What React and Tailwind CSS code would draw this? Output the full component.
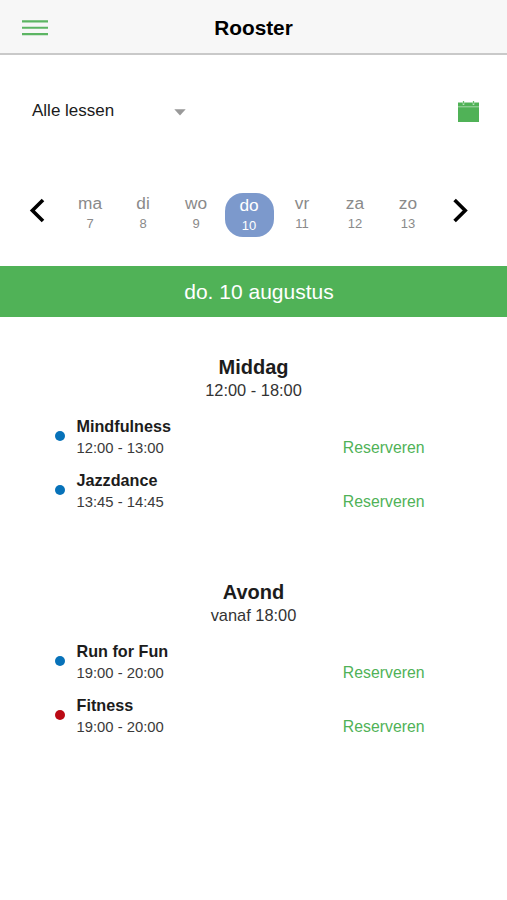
const days = [
  { name: 'ma', date: 7 },
  { name: 'di', date: 8 },
  { name: 'wo', date: 9 },
  { name: 'do', date: 10, active: true },
  { name: 'vr', date: 11 },
  { name: 'za', date: 12 },
  { name: 'zo', date: 13 },
];

const sections = [
  {
    title: 'Middag',
    time: '12:00 - 18:00',
    lessons: [
      { name: 'Mindfulness', time: '12:00 - 13:00', dot: 'bg-[#0772b9]' },
      { name: 'Jazzdance', time: '13:45 - 14:45', dot: 'bg-[#0772b9]' },
    ],
  },
  {
    title: 'Avond',
    time: 'vanaf 18:00',
    lessons: [
      { name: 'Run for Fun', time: '19:00 - 20:00', dot: 'bg-[#0772b9]' },
      { name: 'Fitness', time: '19:00 - 20:00', dot: 'bg-[#bb0a14]' },
    ],
  },
];

function Header() {
  return (
    <header className="grid h-[55px] grid-cols-[1fr_auto_1fr] items-center border-b-2 border-[#c9c9c9] bg-[#f7f7f7] pt-0.5">
      <button className="ml-[22px] w-[26px]">
        <svg width="26" height="16" viewBox="0 0 26 16">
          <path d="M0 1.4h26M0 7.8h26M0 14.1h26" stroke="#5cb563" strokeWidth="2.1" />
        </svg>
      </button>
      <h1 className="text-[20.8px] leading-6 font-bold text-black">Rooster</h1>
    </header>
  );
}

function Filters() {
  return (
    <div className="flex h-[112px] items-center pr-7 pl-8">
      <button className="flex w-[154px] items-center justify-between text-[17px] leading-6 text-[#1a1a1a]">
        Alle lessen
        <svg className="mt-0.5" width="12" height="7" viewBox="0 0 12 7">
          <path d="M0.3 0.3h11.4L6 6.6z" fill="#999" />
        </svg>
      </button>
      <svg className="ml-auto" width="21" height="21" viewBox="0 0 21 21">
        <path d="M0 1.5h21V21H0z" fill="#50b257" />
        <path d="M0 5.8h21" stroke="#a5d8a9" strokeWidth="1" />
        <path d="M5.5 0v4M15.5 0v4" stroke="#b9e0bc" strokeWidth="1.6" />
        <path d="M5.5 0v2.6M15.5 0v2.6" stroke="#50b257" strokeWidth="0.8" />
      </svg>
    </div>
  );
}

function WeekPicker() {
  return (
    <div className="flex h-[99px] items-start justify-between pt-[26px] pr-[38px] pl-[29px]">
      <svg className="mt-[5px]" width="16" height="25" viewBox="0 0 16 25">
        <path d="M14 2L3.4 12.5L14 23" fill="none" stroke="#000" strokeWidth="3.6" />
      </svg>
      <div className="flex gap-1">
        {days.map((day) => (
          <div
            key={day.name}
            className={
              day.active
                ? 'flex h-11 w-[49px] flex-col items-center rounded-[18px] bg-[#7c99cc] pt-0.5 text-white'
                : 'flex h-11 w-[49px] flex-col items-center text-[#8a8a8a]'
            }
          >
            <span className="text-[17.3px] leading-[21px]">{day.name}</span>
            <span className="text-[13px] leading-5">{day.date}</span>
          </div>
        ))}
      </div>
      <svg className="mt-[5px]" width="16" height="25" viewBox="0 0 16 25">
        <path d="M1.6 2L12.2 12.5L1.6 23" fill="none" stroke="#000" strokeWidth="3.6" />
      </svg>
    </div>
  );
}

function Lesson({ lesson }) {
  return (
    <div className="flex h-[54px] items-start">
      <span className={`mt-[15px] mr-3 size-2.5 rounded-full ${lesson.dot}`} />
      <div>
        <p className="text-[16.2px] leading-[21px] font-bold text-[#1c1c1c]">{lesson.name}</p>
        <p className="text-[14.8px] leading-[22px] text-[#3a3a3a]">{lesson.time}</p>
      </div>
      <button className="mt-[21px] ml-auto text-[15.8px] leading-[22px] text-[#50b257]">Reserveren</button>
    </div>
  );
}

export default function App() {
  return (
    <div className="min-h-[900px] w-[507px] bg-white font-['Liberation_Sans',Arial,sans-serif]">
      <Header />
      <Filters />
      <WeekPicker />
      <h2 className="h-[51px] bg-[#50b257] pl-[11px] text-center text-[21px] leading-[52px] text-white">
        do. 10 augustus
      </h2>
      <main className="flex flex-col gap-[56px] pt-[38px]">
        {sections.map((section) => (
          <section key={section.title}>
            <h3 className="text-center text-[20px] leading-6 font-bold text-[#1c1c1c]">{section.title}</h3>
            <p className="text-center text-[16.4px] leading-[23px] text-[#333]">{section.time}</p>
            <div className="mt-[14px] pr-[82.5px] pl-[54.5px]">
              {section.lessons.map((lesson) => (
                <Lesson key={lesson.name} lesson={lesson} />
              ))}
            </div>
          </section>
        ))}
      </main>
    </div>
  );
}
